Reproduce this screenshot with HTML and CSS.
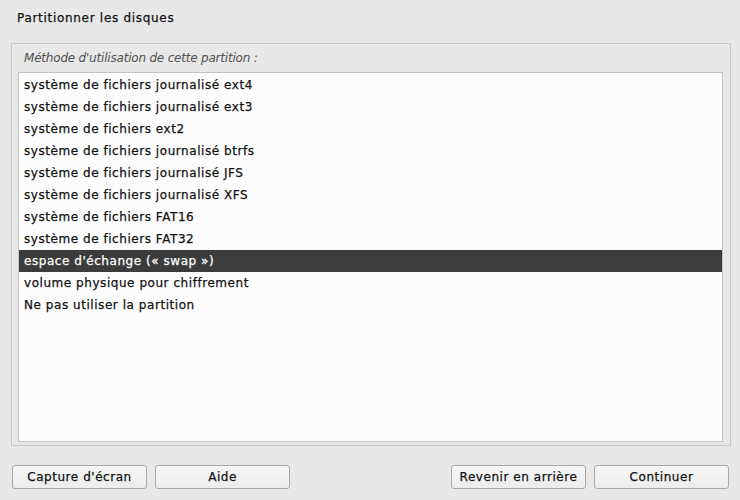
FILE: index.html
```html
<!DOCTYPE html>
<html lang="fr">
<head>
<meta charset="utf-8">
<title>Partitionner les disques</title>
<link rel="stylesheet" href="styles.css">
</head>
<body>
<div class="page">
  <h1 class="title">Partitionner les disques</h1>
  <div class="frame">
    <div class="label">Méthode d'utilisation de cette partition :</div>
    <ul class="list">
      <li>système de fichiers journalisé ext4</li>
      <li>système de fichiers journalisé ext3</li>
      <li>système de fichiers ext2</li>
      <li>système de fichiers journalisé btrfs</li>
      <li>système de fichiers journalisé JFS</li>
      <li>système de fichiers journalisé XFS</li>
      <li>système de fichiers FAT16</li>
      <li>système de fichiers FAT32</li>
      <li class="selected">espace d'échange (« swap »)</li>
      <li>volume physique pour chiffrement</li>
      <li>Ne pas utiliser la partition</li>
    </ul>
  </div>
  <div class="buttons">
    <div class="group">
      <button class="btn">Capture d'écran</button>
      <button class="btn">Aide</button>
    </div>
    <div class="group">
      <button class="btn">Revenir en arrière</button>
      <button class="btn">Continuer</button>
    </div>
  </div>
</div>
</body>
</html>
```

FILE: styles.css
```css
html, body {
  margin: 0;
  padding: 0;
  background: #e8e8e8;
}
body {
  font-family: "DejaVu Sans", sans-serif;
  font-size: 12px;
  color: #111111;
  -webkit-text-stroke: 0.25px currentColor;
}
.page {
  width: 740px;
  height: 500px;
  display: flex;
  flex-direction: column;
}
.title {
  margin: 0;
  font-size: 12px;
  font-weight: normal;
  line-height: 16px;
  letter-spacing: 0.7px;
  padding: 10px 0 0 17px;
  height: 33px;
  box-sizing: border-box;
}
.frame {
  margin: 10px 0 0 11px;
  width: 720px;
  height: 403px;
  box-sizing: border-box;
  border: 1px solid #c9c9c9;
  display: flex;
  flex-direction: column;
  padding: 0 7px 3px 6px;
}
.label {
  font-style: italic;
  color: #505050;
  height: 28px;
  line-height: 28px;
  padding-left: 6px;
  letter-spacing: -0.2px;
  -webkit-text-stroke: 0;
}
.list {
  list-style: none;
  margin: 0;
  padding: 1px 0;
  flex: 1;
  background: #fcfcfc;
  border: 1px solid #c3c3c3;
}
.list li {
  height: 22px;
  line-height: 22px;
  padding-left: 5px;
  letter-spacing: 0.55px;
}
.list li.selected {
  background: #3c3c3c;
  color: #ffffff;
}
.buttons {
  display: flex;
  justify-content: space-between;
  padding: 19px 11px 0 12px;
}
.group {
  display: flex;
  gap: 8px;
}
.btn {
  width: 135px;
  height: 24px;
  box-sizing: border-box;
  border: 1px solid #a9a9a9;
  border-radius: 3px;
  background: linear-gradient(#f6f6f6, #ececec);
  font-family: "DejaVu Sans", sans-serif;
  font-size: 12px;
  letter-spacing: 0.55px;
  color: #111111;
  -webkit-text-stroke: 0.25px currentColor;
  padding: 0;
}
```
